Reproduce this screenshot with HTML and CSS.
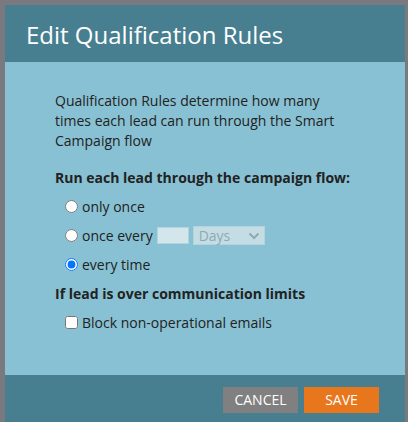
FILE: index.html
```html
<!DOCTYPE HTML>
<html lang="en-US">
<head>
	<meta charset="UTF-8">
	<title>Edit Qualification Rules</title>
	<link rel="stylesheet" href="styles.css">
</head>
<body>
	<div class="qr_dialog">
		<div class="qr_head">Edit Qualification Rules</div>
		<div class="qr_body">
			<p class="qr_intro">Qualification Rules determine how many times each lead can run through the Smart Campaign flow</p>
			<div class="qr_title">Run each lead through the campaign flow:</div>
			<label class="qr_opt"><input type="radio" name="run" />only once</label>
			<label class="qr_opt"><input type="radio" name="run" />once every
				<span class="qr_num"></span>
				<span class="qr_sel">Days
					<svg width="12" height="8" viewBox="0 0 12 8"><path d="M1.5 1.5 L6 6 L10.5 1.5" fill="none" stroke="#8fa9b1" stroke-width="2"/></svg>
				</span>
			</label>
			<label class="qr_opt"><input type="radio" name="run" checked />every time</label>
			<div class="qr_title qr_title2">If lead is over communication limits</div>
			<label class="qr_opt"><input type="checkbox" name="block" />Block non-operational emails</label>
		</div>
		<!-- qr_body end -->
		<div class="qr_foot">
			<span class="qr_btn qr_cancel">CANCEL</span>
			<span class="qr_btn qr_save">SAVE</span>
		</div>
	</div>
	<!-- qr_dialog end -->
</body>
</html>
```

FILE: styles.css
```css
html, body {
		margin:0;
		padding:0;
		height:100%;
		background:#7a797f;
		overflow:hidden;
	}
.qr_dialog {
		margin:5px 0 0 5px;
		width:400px;
		font-family:"Open Sans", "Liberation Sans", sans-serif;
		color:#222;
	}
.qr_head {
		height:57px;
		padding:3px 0 0 21px;
		box-sizing:border-box;
		background:#477f90;
		color:#fff;
		font-size:24px;
		line-height:54px;
	}
.qr_body {
		height:313px;
		padding:29px 55px 0 50px;
		box-sizing:border-box;
		background:#88c1d3;
		font-size:14px;
	}
.qr_intro {
		margin:0 0 17px;
		line-height:20px;
	}
.qr_title {
		font-weight:bold;
		line-height:20px;
		margin-bottom:4px;
		white-space:nowrap;
	}
.qr_title2 {
		margin-top:5px;
	}
.qr_opt {
		display:flex;
		align-items:center;
		height:29px;
		padding-left:10px;
	}
.qr_opt input {
		margin:0 4px 0 0;
		width:13px;
		height:13px;
	}
.qr_num {
		display:inline-block;
		width:30px;
		height:15px;
		margin-left:4px;
		background:#d3e6ec;
		border:1px solid #b3d3dd;
	}
.qr_sel {
		display:inline-flex;
		align-items:center;
		justify-content:space-between;
		width:61px;
		height:17px;
		margin-left:4px;
		padding:0 4px 0 5px;
		box-sizing:content-box;
		background:#c4dde5;
		border:1px solid #b3d3dd;
		color:#8fa9b1;
	}
.qr_foot {
		display:flex;
		justify-content:flex-end;
		gap:6px;
		height:60px;
		padding:12px 26px 0 0;
		box-sizing:border-box;
		background:#477f90;
	}
.qr_btn {
		width:75px;
		height:26px;
		color:#fff;
		font-size:14px;
		line-height:26px;
		text-align:center;
	}
.qr_cancel {
		background:#808080;
	}
.qr_save {
		background:#e8761c;
	}
```
